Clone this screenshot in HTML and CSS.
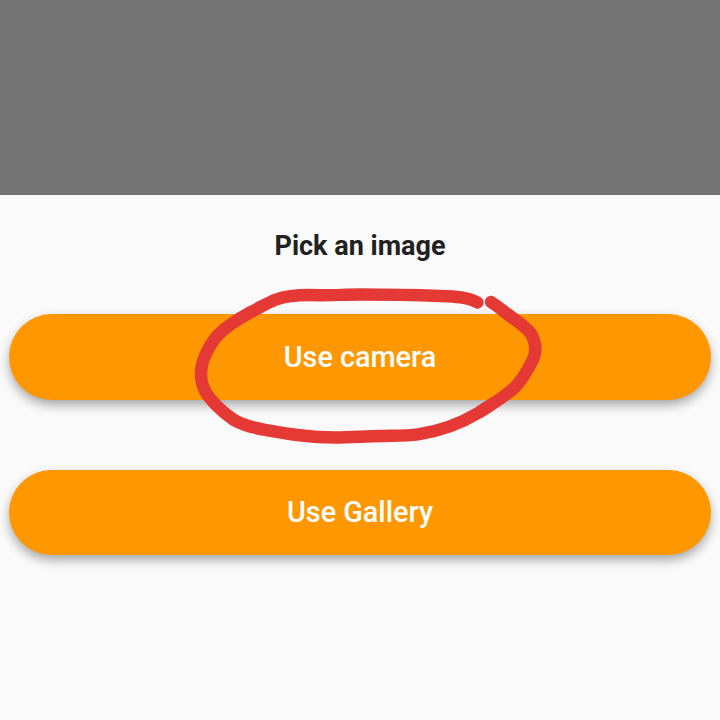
FILE: index.html
```html
<!DOCTYPE html>
<html lang="en">
<head>
<meta charset="utf-8">
<title>Pick an image</title>
<link rel="stylesheet" href="styles.css">
</head>
<body>
<div class="scrim"></div>
<main class="sheet">
<h1 class="title">Pick an image</h1>
<button class="action"><span>Use camera</span></button>
<button class="action"><span>Use Gallery</span></button>
</main>
<svg class="marker" viewBox="0 0 720 720" aria-hidden="true">
<path d="M477.500 302.500C468 297 455 296.500 440 296C415 295 390 294.500 360 294.500C345 294.500 335 295.500 320 295.300C304 294.500 290 294.500 276 299.500C268 302.500 260 307.500 251 312C240 318 228 325 219 334C211 342 206 353 203 361C200 371 200 381 205 391C210 400 222 412 234 420C243 425 254 428 266 430C289 434 309 437.500 335 437.500C350 437.500 362 436.500 380 436C393 435.500 405 436 418 434.300C438 431.500 459 424.500 479 412.500C492 404 507 396 517 385C524 377 528 369 532 361.500C536.500 353 536 343 531.500 334.500C527 327 515 320 506 313C501 309 496 305 491 302"/>
</svg>
</body>
</html>
```
FILE: styles.css
```css
body {
  margin: 0;
  height: 720px;
  overflow: hidden;
  position: relative;
  display: flex;
  flex-direction: column;
  background: #fafafa;
  font-family: Roboto, sans-serif;
}
.scrim {
  height: 195px;
  flex: none;
  background: #737373;
}
.sheet {
  flex: 1;
  display: flex;
  flex-direction: column;
  padding: 34px 9px 0;
}
.title {
  margin: 0 0 51px;
  text-align: center;
  font-size: 27px;
  line-height: 34px;
  font-weight: 700;
  color: #212121;
}
.action {
  height: 85.5px;
  flex: none;
  margin: 0 0 70px;
  padding: 0;
  border: 0;
  border-radius: 43px;
  background: #ff9800;
  box-shadow: 0 6px 12px -1px rgba(0, 0, 0, .28), 0 3px 12px rgba(0, 0, 0, .1);
  color: #fff;
  font: 500 28.8px/34px Roboto, sans-serif;
}
.marker {
  position: absolute;
  inset: 0;
  width: 720px;
  height: 720px;
  fill: none;
  stroke: #e53935;
  stroke-width: 12.4;
  stroke-linecap: round;
  stroke-linejoin: round;
  pointer-events: none;
}
```
